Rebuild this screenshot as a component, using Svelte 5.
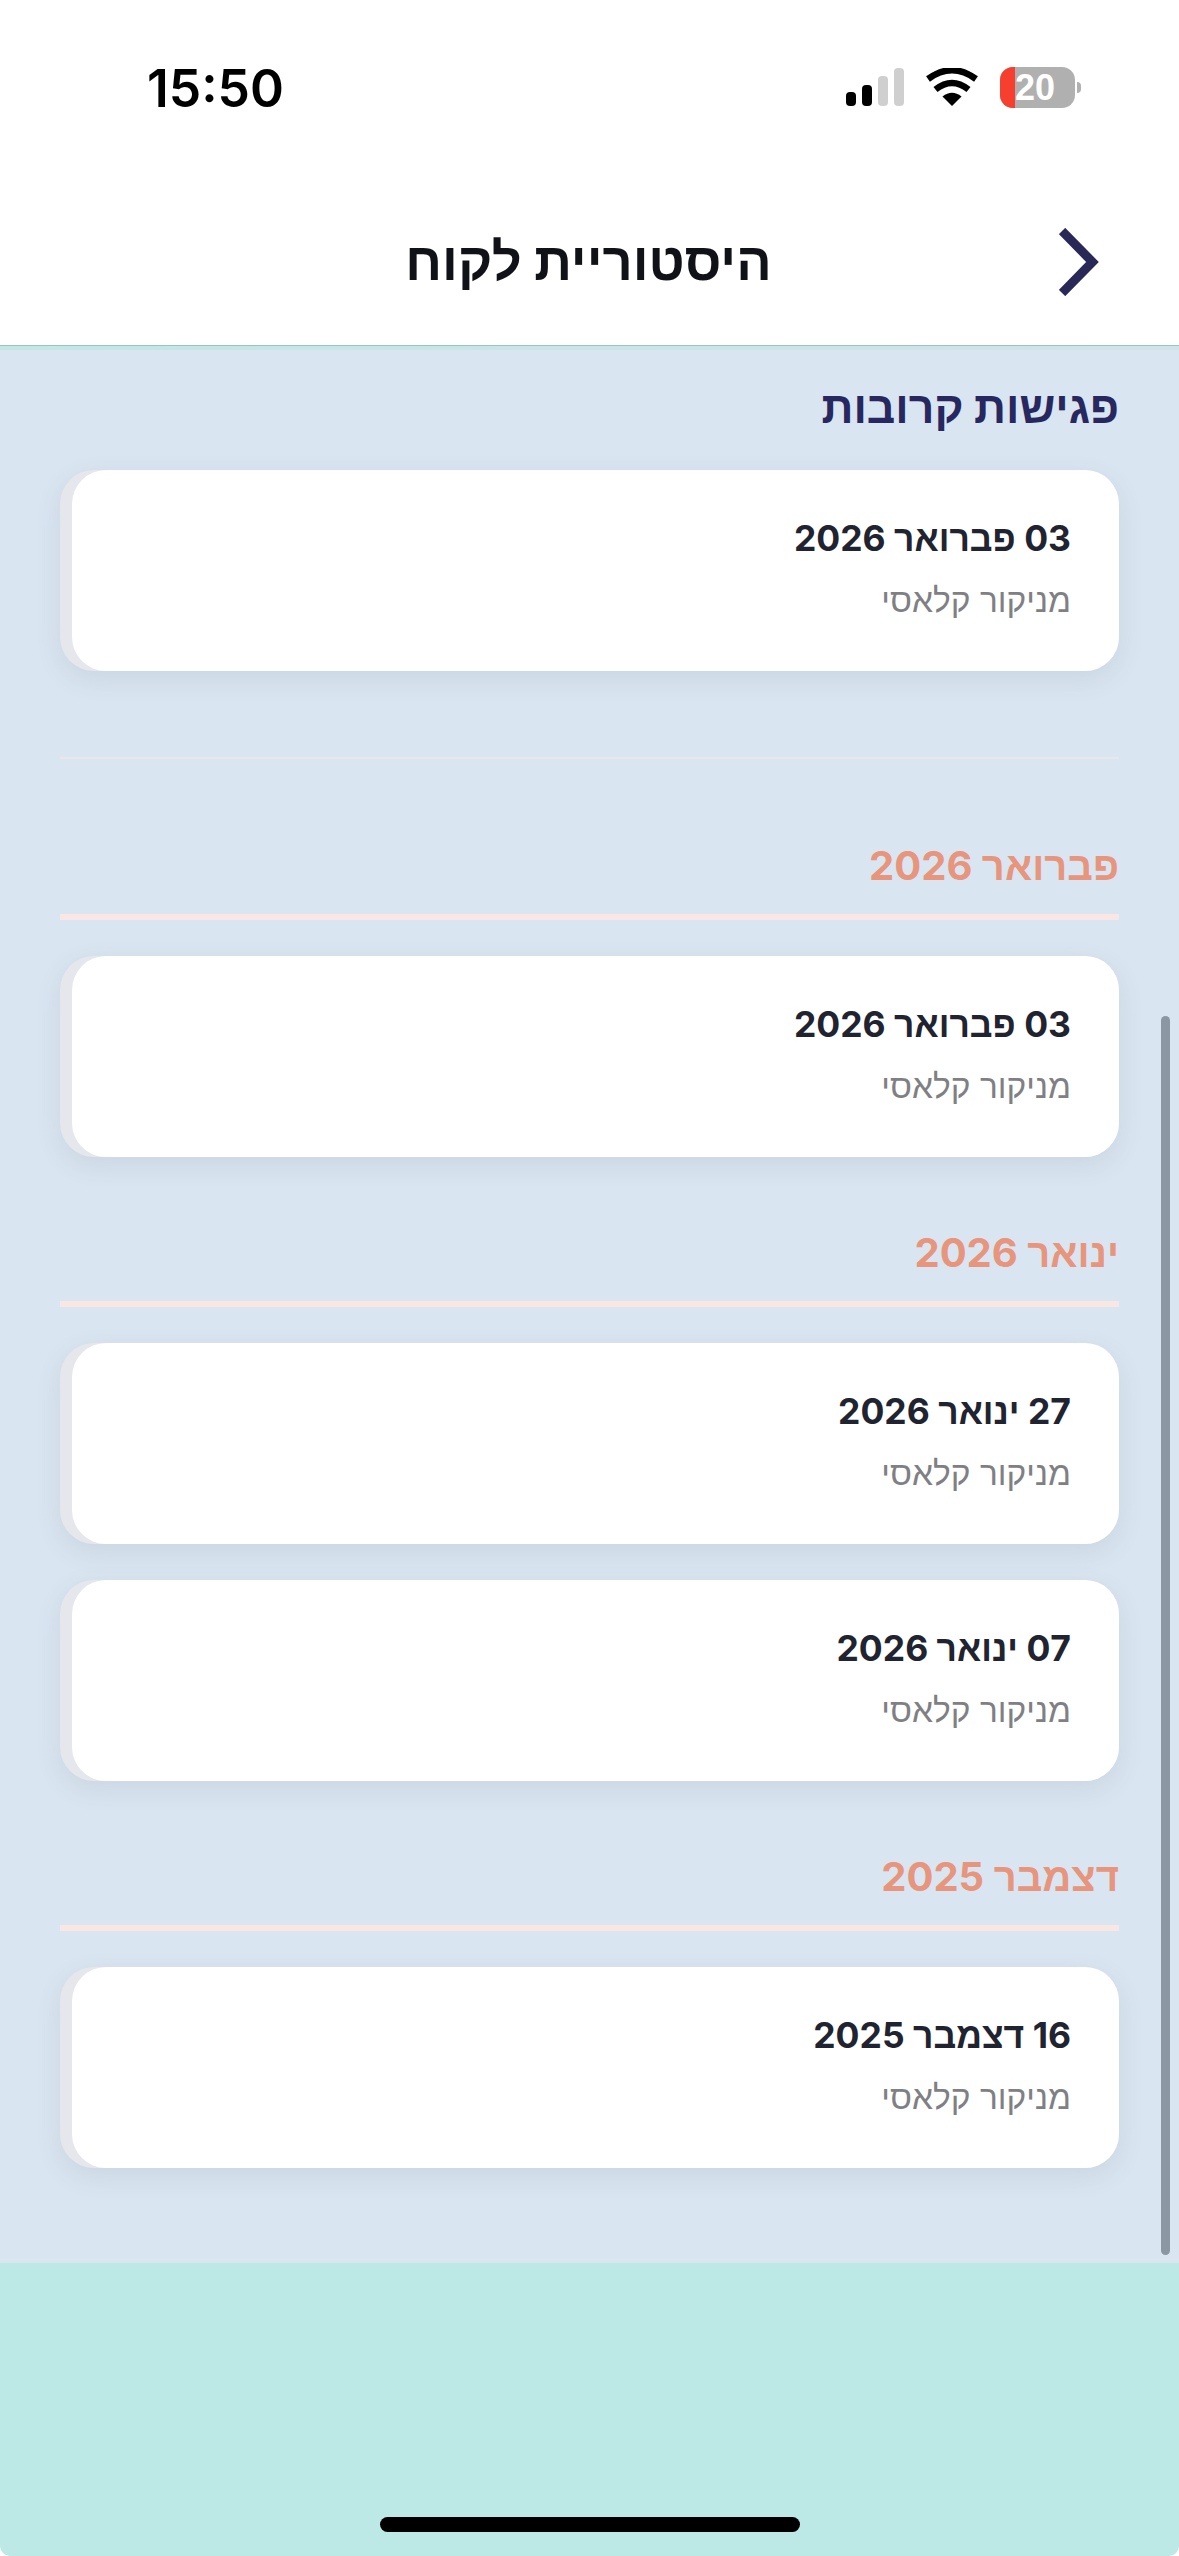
<script lang="ts">
  const upcoming = [{ date: '03 פברואר 2026', service: 'מניקור קלאסי' }];

  const months = [
    { title: 'פברואר 2026', visits: [{ date: '03 פברואר 2026', service: 'מניקור קלאסי' }] },
    {
      title: 'ינואר 2026',
      visits: [
        { date: '27 ינואר 2026', service: 'מניקור קלאסי' },
        { date: '07 ינואר 2026', service: 'מניקור קלאסי' }
      ]
    },
    { title: 'דצמבר 2025', visits: [{ date: '16 דצמבר 2025', service: 'מניקור קלאסי' }] }
  ];
</script>

{#snippet visitCard(visit)}
  <div class="card">
    <div class="card-body">
      <div class="date">{visit.date}</div>
      <div class="service">{visit.service}</div>
    </div>
  </div>
{/snippet}

<div class="screen">
  <div class="status-bar">
    <span class="time">15:50</span>
    <div class="status-icons">
      <div class="signal">
        <span class="bar b1"></span>
        <span class="bar b2"></span>
        <span class="bar b3"></span>
        <span class="bar b4"></span>
      </div>
      <svg class="wifi" width="52" height="38" viewBox="0 0 52 38">
        <path d="M26 38 L16.5 28.5 Q26 21 35.5 28.5 Z" fill="#000" />
        <path d="M9.5 21.5 Q26 8.5 42.5 21.5" fill="none" stroke="#000" stroke-width="6.5" />
        <path d="M2 11 Q26 -6.5 50 11" fill="none" stroke="#000" stroke-width="6.5" />
      </svg>
      <div class="battery">
        <div class="battery-body">
          <span class="battery-low"></span>
          <span class="battery-num">20</span>
        </div>
        <span class="battery-tip"></span>
      </div>
    </div>
  </div>

  <header class="header">
    <h1>היסטוריית לקוח</h1>
    <button class="back" aria-label="חזרה">
      <svg width="40" height="68" viewBox="0 0 40 68">
        <path d="M3 3 L33.5 34 L3 65" fill="none" stroke="#2a2857" stroke-width="9" />
      </svg>
    </button>
  </header>
  <div class="header-line"></div>

  <main class="content">
    <section class="upcoming">
      <h2 class="upcoming-title">פגישות קרובות</h2>
      {#each upcoming as visit}
        {@render visitCard(visit)}
      {/each}
    </section>
    <div class="divider"></div>

    {#each months as month}
      <section class="month">
        <h3 class="month-title">{month.title}</h3>
        <div class="month-line"></div>
        <div class="visits">
          {#each month.visits as visit}
            {@render visitCard(visit)}
          {/each}
        </div>
      </section>
    {/each}

    <div class="scrollbar"></div>
  </main>

  <footer class="footer">
    <div class="home-indicator"></div>
  </footer>
</div>

<style>
  :global(body) {
    margin: 0;
    background: #fff;
  }
  .screen {
    width: 1179px;
    height: 2556px;
    display: flex;
    flex-direction: column;
    background: #fff;
    font-family: Inter, "Liberation Sans", sans-serif;
    overflow: hidden;
    border-radius: 0 0 10px 10px;
  }
  .status-bar {
    height: 176px;
    box-sizing: border-box;
    padding: 58px 98px 0 147px;
    display: flex;
    justify-content: space-between;
    align-items: flex-start;
    flex-shrink: 0;
  }
  .time {
    font-size: 51.5px;
    line-height: 60px;
    font-weight: 600;
    color: #000;
  }
  .status-icons {
    display: flex;
    align-items: flex-end;
    gap: 22px;
    margin-top: 9px;
  }
  .signal {
    display: flex;
    align-items: flex-end;
    gap: 6px;
    height: 38px;
  }
  .bar {
    width: 10px;
    border-radius: 4px;
    background: #000;
  }
  .b1 { height: 14px; }
  .b2 { height: 21px; }
  .b3 { height: 30px; background: #cfcfcf; }
  .b4 { height: 38px; background: #cfcfcf; }
  .battery {
    display: flex;
    align-items: center;
    gap: 2px;
    margin-bottom: -2px;
  }
  .battery-body {
    position: relative;
    width: 75px;
    height: 41px;
    border-radius: 13px;
    background: #b0b0b0;
    overflow: hidden;
  }
  .battery-low {
    position: absolute;
    left: 0;
    top: 0;
    bottom: 0;
    width: 15px;
    background: #f63f2e;
  }
  .battery-num {
    position: absolute;
    left: 15px;
    top: 0;
    font-size: 36px;
    line-height: 41px;
    font-weight: 700;
    color: #fff;
    font-family: "Liberation Sans", sans-serif;
  }
  .battery-tip {
    width: 4px;
    height: 11px;
    background: #b0b0b0;
    border-radius: 0 6px 6px 0;
  }
  .header {
    height: 169px;
    flex-shrink: 0;
    position: relative;
    box-sizing: border-box;
    padding-top: 55px;
    display: flex;
    justify-content: center;
  }
  h1 {
    margin: 0 0 0 -2px;
    direction: rtl;
    font-size: 52.5px;
    line-height: 60px;
    font-weight: 700;
    color: #111118;
  }
  .back {
    position: absolute;
    left: 1059px;
    top: 52px;
    padding: 0;
    border: none;
    background: none;
    line-height: 0;
  }
  .header-line {
    height: 5px;
    flex-shrink: 0;
    box-sizing: border-box;
    border-top: 1px solid #9cc3c2;
    background: linear-gradient(to right, #c3e6e5, #d0e3e8);
  }
  .content {
    position: relative;
    height: 1913px;
    flex-shrink: 0;
    box-sizing: border-box;
    padding: 33px 60px 0;
    background: #d9e5f0;
    direction: rtl;
    overflow: hidden;
  }
  .upcoming-title {
    margin: 0 0 39px;
    font-size: 44.5px;
    line-height: 48px;
    font-weight: 700;
    color: #27285f;
  }
  .card {
    height: 201px;
    padding-left: 12px;
    border-radius: 34px;
    background: #e5e7ec;
    box-shadow: 0 8px 26px rgba(80, 90, 110, 0.11);
    direction: ltr;
  }
  .card-body {
    height: 100%;
    box-sizing: border-box;
    padding: 47px 48px 0 0;
    border-radius: 34px;
    background: #fff;
    direction: rtl;
  }
  .date {
    font-size: 35.5px;
    line-height: 44px;
    font-weight: 700;
    color: #1f2430;
  }
  .service {
    margin-top: 19px;
    font-size: 33.5px;
    line-height: 42px;
    color: #7f8084;
    font-family: "Liberation Sans", sans-serif;
  }
  .divider {
    margin-top: 86px;
    height: 2px;
    background: #ebe6ea;
  }
  .month {
    margin-top: 72px;
  }
  .divider + .month {
    margin-top: 83px;
  }
  .month-title {
    margin: 0;
    font-size: 40px;
    line-height: 48px;
    font-weight: 700;
    color: #e8957e;
  }
  .month-line {
    margin: 24px 0 36px;
    height: 6px;
    background: #fae6e2;
  }
  .visits {
    display: flex;
    flex-direction: column;
    gap: 36px;
  }
  .scrollbar {
    position: absolute;
    left: 1161px;
    top: 666px;
    width: 9px;
    height: 1239px;
    border-radius: 5px;
    background: #8b98a3;
  }
  .footer {
    flex: 1;
    position: relative;
    background: #bce8e6;
  }
  .home-indicator {
    position: absolute;
    left: 380px;
    top: 254px;
    width: 420px;
    height: 15px;
    border-radius: 8px;
    background: #000;
  }
</style>
